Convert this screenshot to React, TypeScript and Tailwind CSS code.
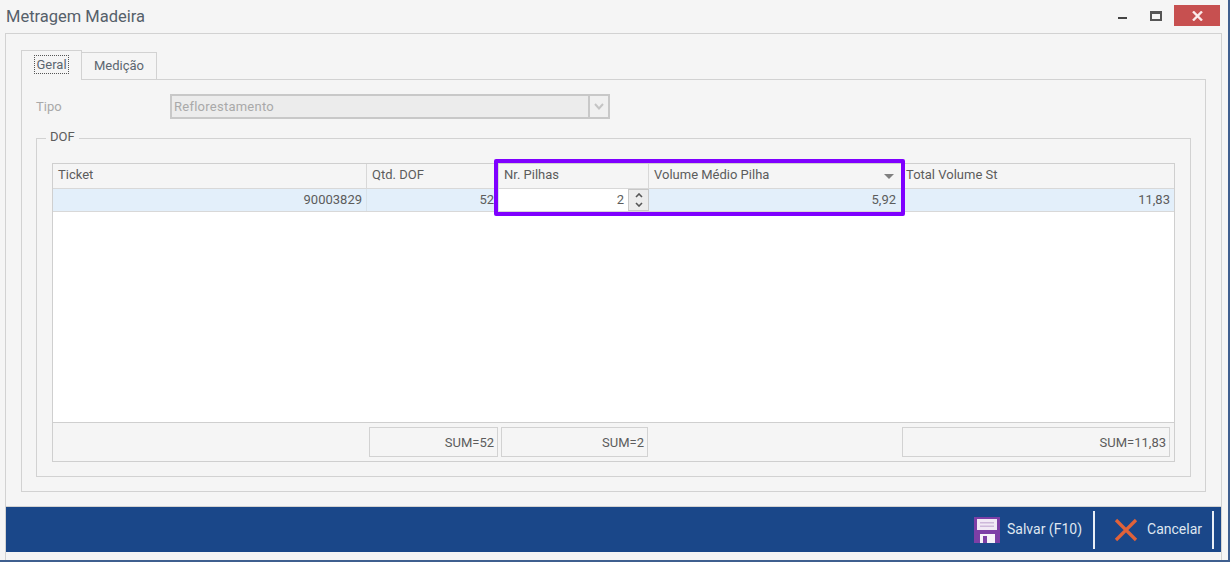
const line = 'border-[#d2d2d2]'

function HeaderCell({ label, width, sort }: { label: string; width: string; sort?: boolean }) {
  return (
    <div className={`${width} shrink-0 h-full flex items-center justify-between pl-[5px] pr-[8px] pb-[3px] border-r border-[#d8d8d8] text-[#5c5c5c]`}>
      <span>{label}</span>
      {sort && <span className="w-0 h-0 mt-[3px] border-l-[5px] border-r-[5px] border-t-[5px] border-l-transparent border-r-transparent border-t-[#808080]" />}
    </div>
  )
}

function RowCell({ value, width, pad }: { value: string; width: string; pad: string }) {
  return (
    <div className={`${width} ${pad} shrink-0 h-full flex items-center justify-end pb-[1px] border-r border-[#d8e2ea] text-[#5c5c5c]`}>
      {value}
    </div>
  )
}

function SumCell({ value, width, margin }: { value: string; width: string; margin: string }) {
  return (
    <div className={`${width} ${margin} shrink-0 h-[30px] flex items-center justify-end pr-[3px] border border-[#d2d2d2] text-[#5c5c5c]`}>
      {value}
    </div>
  )
}

function SaveIcon() {
  return (
    <svg width="26" height="26" viewBox="0 0 26 26">
      <path d="M0 0H26V26H0Z" fill="#7d3fa6" />
      <path d="M3 2H23V13H3Z" fill="#f1e9f5" />
      <path d="M6 5H20V6.5H6ZM6 8.5H20V10H6Z" fill="#cdb8da" />
      <path d="M6 17H21V26H6Z" fill="#f6f1f8" />
      <path d="M9 19H13V26H9Z" fill="#7d3fa6" />
    </svg>
  )
}

function CancelIcon() {
  return (
    <svg width="24" height="24" viewBox="0 0 24 24">
      <path d="M2 2L22 22M22 2L2 22" stroke="#e0623a" strokeWidth="3.2" fill="none" />
    </svg>
  )
}

export default function App() {
  return (
    <div className="w-[1230px] h-[562px] bg-[#f5f5f5] flex flex-col overflow-hidden border-r-2 border-b-2 border-[#3f5f8f] text-[13px] leading-none font-[family-name:Roboto,sans-serif]">
      {/* Title bar */}
      <div className="h-[33px] shrink-0 flex items-start justify-between">
        <div className="pl-[6px] pt-[7px] text-[16.5px] leading-[20px] text-[#55606a]">Metragem Madeira</div>
        <div className="flex items-start">
          <div className="w-[9px] h-[2px] mt-[17px] bg-[#444]" />
          <div className="w-[12px] h-[10px] mt-[11px] ml-[23px] border-2 border-t-[3px] border-[#555]" />
          <div className="w-[46px] h-[21px] mt-[5px] ml-[12px] mr-[8px] bg-[#c75050] flex items-center justify-center">
            <svg width="11" height="10" viewBox="0 0 11 10">
              <path d="M1 0.5L10 9.5M10 0.5L1 9.5" stroke="#fbeaea" strokeWidth="2.4" fill="none" />
            </svg>
          </div>
        </div>
      </div>

      {/* Body */}
      <div className={`ml-[5px] mr-[6px] flex-1 flex flex-col border-x border-t ${line}`}>
        <div className="flex-1 flex flex-col px-[15px] pt-[16px] pb-[14px]">
          {/* Tabs */}
          <div className="h-[29px] shrink-0 flex items-end text-[#5c6670]">
            <div className={`w-[61px] h-[30px] relative z-10 -mb-px pb-[2px] bg-[#f5f5f5] border-x border-t ${line} flex items-center justify-center`}>
              <span className="px-[1px] py-[2px] border border-dotted border-[#555]">Geral</span>
            </div>
            <div className={`w-[75px] h-[27px] pb-[2px] border-r border-t ${line} flex items-center justify-center`}>Medição</div>
          </div>

          {/* Tab page */}
          <div className={`flex-1 flex flex-col border ${line} px-[14px] pb-[14px]`}>
            <div className="h-[53px] shrink-0 flex items-center text-[#a9a9a9]">
              <div className="w-[134px]">Tipo</div>
              <div className="w-[440px] h-[25px] flex border-2 border-[#c8c8c8] bg-[#ececec]">
                <div className="flex-1 flex items-center pl-[2px] tracking-[0.25px]">Reflorestamento</div>
                <div className="w-[20px] border-l-2 border-[#c8c8c8] bg-[#f0f0f0] flex items-center justify-center">
                  <svg width="10" height="7" viewBox="0 0 10 7">
                    <path d="M1 1L5 5.5L9 1" stroke="#c4c4c4" strokeWidth="2" fill="none" />
                  </svg>
                </div>
              </div>
            </div>

            {/* DOF group */}
            <div className={`relative mt-[5px] flex-1 flex flex-col border ${line} px-[15px] pt-[24px] pb-[14px]`}>
              <span className="absolute left-[9px] -top-[9px] px-[4px] bg-[#f5f5f5] text-[#5c5c5c]">DOF</span>

              {/* Grid */}
              <div className="relative flex-1 flex flex-col border border-[#cfcfcf] bg-white">
                <div className="h-[25px] shrink-0 flex border-b border-[#d8d8d8] bg-[#f5f5f5]">
                  <HeaderCell label="Ticket" width="w-[314px]" />
                  <HeaderCell label="Qtd. DOF" width="w-[132px]" />
                  <HeaderCell label="Nr. Pilhas" width="w-[150px]" />
                  <HeaderCell label="Volume Médio Pilha" width="w-[254px]" sort />
                  <div className="flex-1 flex items-center pl-[3px] pb-[3px] text-[#5c5c5c]">Total Volume St</div>
                </div>
                <div className="h-[23px] shrink-0 flex border-b border-[#d8d8d8] bg-[#e3effa]">
                  <RowCell value="90003829" width="w-[314px]" pad="pr-[4px]" />
                  <RowCell value="52" width="w-[132px]" pad="pr-[4px]" />
                  <div className="w-[150px] shrink-0 h-full flex items-center justify-end bg-white text-[#5c5c5c]">
                    <span className="pr-[4px] pb-[1px]">2</span>
                    <div className="w-[21px] h-full flex flex-col items-center justify-center gap-[4px] bg-[#ececec] border border-[#c8c8c8]">
                      <svg width="8" height="5" viewBox="0 0 8 5"><path d="M1 4L4 1L7 4" stroke="#555" strokeWidth="1.6" fill="none" /></svg>
                      <svg width="8" height="5" viewBox="0 0 8 5"><path d="M1 1L4 4L7 1" stroke="#555" strokeWidth="1.6" fill="none" /></svg>
                    </div>
                  </div>
                  <RowCell value="5,92" width="w-[254px]" pad="pr-[6px]" />
                  <div className="flex-1 flex items-center justify-end pr-[4px] pb-[1px] text-[#5c5c5c]">11,83</div>
                </div>
                <div className="flex-1 bg-white" />
                <div className="h-[39px] shrink-0 flex items-center border-t border-[#cfcfcf] bg-[#f5f5f5]">
                  <SumCell value="SUM=52" width="w-[129px]" margin="ml-[316px]" />
                  <SumCell value="SUM=2" width="w-[147px]" margin="ml-[3px]" />
                  <SumCell value="SUM=11,83" width="w-[268px]" margin="ml-[254px]" />
                </div>

                {/* Highlight over the columns */}
                <div className="absolute left-[441px] -top-[5px] w-[411px] h-[57px] border-4 border-[#7f00ff] rounded-[2px] pointer-events-none" />
              </div>
            </div>
          </div>
        </div>

        {/* Footer */}
        <div className="h-[46px] shrink-0 flex items-center justify-end bg-[#1a4789] border-t border-[#d2d2d2] text-[14px] text-[#dfe6f0] mb-[8px]">
          <SaveIcon />
          <span className="ml-[7px] pb-[1px]">Salvar (F10)</span>
          <div className="w-[2px] h-[38px] ml-[11px] bg-[#e8eef6]" />
          <div className="ml-[19px]"><CancelIcon /></div>
          <span className="ml-[9px] pb-[1px]">Cancelar</span>
          <div className="w-[2px] h-[38px] ml-[10px] mr-[7px] bg-[#e8eef6]" />
        </div>
      </div>
    </div>
  )
}
